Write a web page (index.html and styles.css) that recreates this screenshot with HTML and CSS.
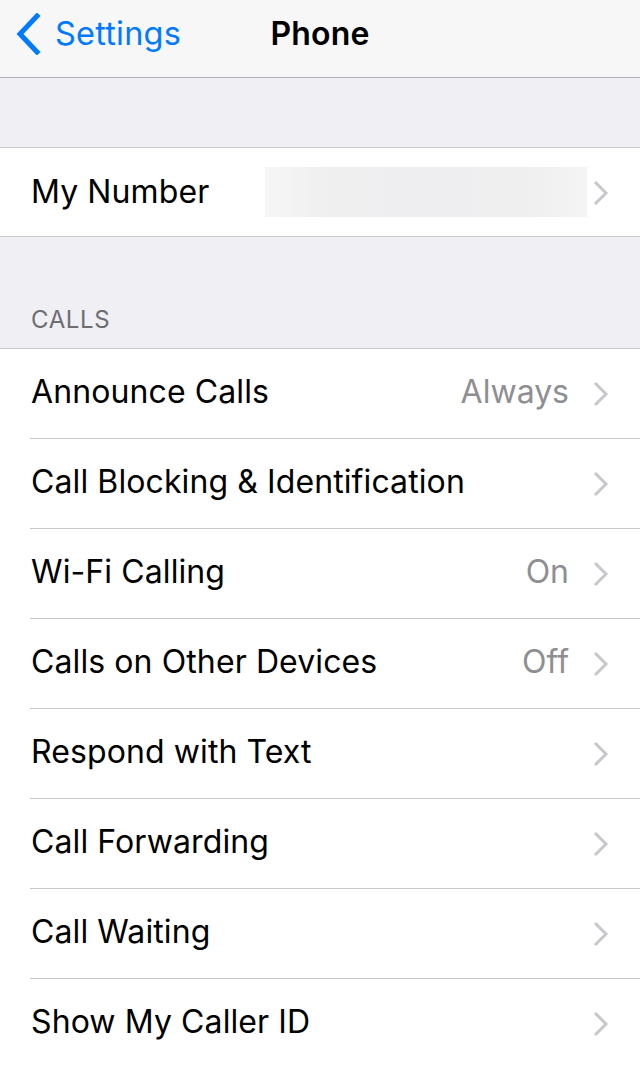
FILE: index.html
```html
<!DOCTYPE html>
<html>
<head>
<meta charset="utf-8">
<link rel="stylesheet" href="styles.css">
</head>
<body>
<header class="nav">
  <div class="back">
    <svg class="back-icon" width="26" height="42" viewBox="0 0 26 42"><path d="M22 3 L5 21 L22 39" fill="none" stroke="#007aff" stroke-width="5" stroke-linecap="square"/></svg>
    <span class="back-label">Settings</span>
  </div>
  <div class="title">Phone</div>
</header>
<div class="spacer-top"></div>
<section class="group">
  <div class="row row-last">
    <span class="label">My Number</span>
    <span class="blur"></span>
    <svg class="chev" width="16" height="26" viewBox="0 0 16 26"><path d="M2 2 L13 13 L2 24" fill="none" stroke="#c7c7cc" stroke-width="3"/></svg>
  </div>
</section>
<div class="section-head">CALLS</div>
<section class="group">
  <div class="row"><span class="label">Announce Calls</span><span class="value">Always</span><svg class="chev" width="16" height="26" viewBox="0 0 16 26"><path d="M2 2 L13 13 L2 24" fill="none" stroke="#c7c7cc" stroke-width="3"/></svg></div>
  <div class="row"><span class="label">Call Blocking &amp; Identification</span><svg class="chev" width="16" height="26" viewBox="0 0 16 26"><path d="M2 2 L13 13 L2 24" fill="none" stroke="#c7c7cc" stroke-width="3"/></svg></div>
  <div class="row"><span class="label">Wi-Fi Calling</span><span class="value">On</span><svg class="chev" width="16" height="26" viewBox="0 0 16 26"><path d="M2 2 L13 13 L2 24" fill="none" stroke="#c7c7cc" stroke-width="3"/></svg></div>
  <div class="row"><span class="label">Calls on Other Devices</span><span class="value">Off</span><svg class="chev" width="16" height="26" viewBox="0 0 16 26"><path d="M2 2 L13 13 L2 24" fill="none" stroke="#c7c7cc" stroke-width="3"/></svg></div>
  <div class="row"><span class="label">Respond with Text</span><svg class="chev" width="16" height="26" viewBox="0 0 16 26"><path d="M2 2 L13 13 L2 24" fill="none" stroke="#c7c7cc" stroke-width="3"/></svg></div>
  <div class="row"><span class="label">Call Forwarding</span><svg class="chev" width="16" height="26" viewBox="0 0 16 26"><path d="M2 2 L13 13 L2 24" fill="none" stroke="#c7c7cc" stroke-width="3"/></svg></div>
  <div class="row"><span class="label">Call Waiting</span><svg class="chev" width="16" height="26" viewBox="0 0 16 26"><path d="M2 2 L13 13 L2 24" fill="none" stroke="#c7c7cc" stroke-width="3"/></svg></div>
  <div class="row row-last"><span class="label">Show My Caller ID</span><svg class="chev" width="16" height="26" viewBox="0 0 16 26"><path d="M2 2 L13 13 L2 24" fill="none" stroke="#c7c7cc" stroke-width="3"/></svg></div>
</section>
</body>
</html>
```
FILE: styles.css
```css
* { box-sizing: border-box; }
html, body { margin: 0; padding: 0; }
body {
  background: #efeff4;
  font-family: "Inter", "Liberation Sans", sans-serif;
  color: #000;
  width: 640px;
  height: 1069px;
  overflow: hidden;
}
.nav {
  height: 78px;
  background: #f7f7f8;
  border-bottom: 1px solid #b1b1b3;
  position: relative;
  display: flex;
  align-items: center;
}
.back {
  display: flex;
  align-items: center;
  padding-left: 15px;
  gap: 14px;
  color: #007aff;
  font-size: 32.5px;
  margin-top: -10px;
}
.back-icon { display: block; }
.back-label { letter-spacing: 0.2px; }
.title {
  position: absolute;
  left: 0; right: 0;
  top: 14px;
  text-align: center;
  font-size: 32px;
  font-weight: 600;
  letter-spacing: 0.2px;
}
.spacer-top { height: 69px; }
.group {
  background: #fff;
  border-top: 1px solid #c8c7cc;
  border-bottom: 1px solid #c8c7cc;
}
.row {
  height: 90px;
  display: flex;
  align-items: center;
  padding-left: 31px;
  padding-right: 31px;
  padding-bottom: 5px;
  position: relative;
  font-size: 32px;
}
.row::after {
  content: "";
  position: absolute;
  left: 30px; right: 0; bottom: 0;
  height: 1px;
  background: #c8c7cc;
}
.row-last::after { display: none; }
.group:first-of-type .row { height: 88px; padding-bottom: 2px; }
.label { flex: 1; letter-spacing: 0.1px; }
.value { color: #8e8e93; margin-right: 24px; }
.chev { display: block; margin-top: 4px; }
.blur {
  width: 322px;
  height: 50px;
  margin-right: 6px;
  margin-top: 2px;
  background: linear-gradient(90deg, #f6f6f7 0%, #efeff0 20%, #eeeef0 50%, #efeff0 80%, #f4f4f5 100%);
}
.section-head {
  height: 111px;
  padding-left: 31px;
  padding-top: 68px;
  font-size: 24px;
  color: #6d6d72;
  letter-spacing: 0.6px;
}
```
